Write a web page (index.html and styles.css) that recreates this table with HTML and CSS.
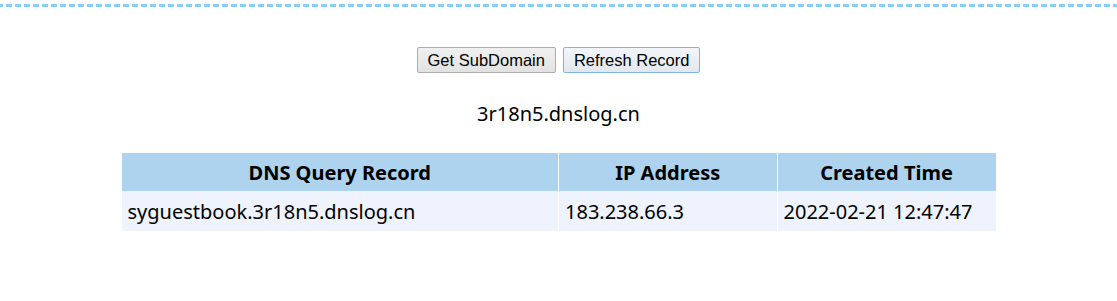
FILE: index.html
```html
<!DOCTYPE html>
<html lang="en">

<head>
    <meta charset="UTF-8">
    <meta name="viewport" content="width=device-width, initial-scale=1.0">
    <title>DNSLog Platform</title>
    <link rel="stylesheet" href="styles.css">
</head>

<body>
    <div class="top-line"></div>

    <div class="toolbar">
        <button type="button" class="btn">Get SubDomain</button>
        <button type="button" class="btn btn-active">Refresh Record</button>
    </div>

    <div class="domain" id="myDomain">3r18n5.dnslog.cn</div>

    <table class="records">
        <thead>
            <tr>
                <th class="col-query">DNS Query Record</th>
                <th class="col-ip">IP Address</th>
                <th class="col-time">Created Time</th>
            </tr>
        </thead>
        <tbody id="myRecords">
            <tr>
                <td>syguestbook.3r18n5.dnslog.cn</td>
                <td>183.238.66.3</td>
                <td>2022-02-21 12:47:47</td>
            </tr>
        </tbody>
    </table>
</body>

</html>
```

FILE: styles.css
```css
body {
    margin: 0;
    font-family: 'Noto Sans', 'Open Sans', sans-serif;
    color: #000;
    background-color: #fff;
}

/* dashed strip across the top */
.top-line {
    height: 3px;
    margin-top: 4px;
    background: repeating-linear-gradient(to right, #87cefa 0 6px, transparent 6px 9px);
    background-position: -3px 0;
}

.toolbar {
    display: flex;
    justify-content: center;
    gap: 7px;
    margin-top: 40px;
}

.btn {
    height: 26px;
    padding: 0 10px;
    font-family: 'Liberation Sans', Arial, sans-serif;
    font-size: 16.5px;
    color: #000;
    background: linear-gradient(#f0f0f0, #e2e2e2);
    border: 1px solid #adadad;
    border-radius: 2px;
    cursor: pointer;
}

.btn-active {
    border-color: #7eb4ea;
    background: linear-gradient(#f2f5f9, #e4e8ee);
}

.domain {
    margin-top: 27px;
    text-align: center;
    font-size: 20px;
    line-height: 28px;
}

.records {
    width: 874px;
    margin: 25px auto 0;
    border-collapse: collapse;
    font-size: 20px;
}

.records th,
.records td {
    border-left: 1px solid #fff;
    padding: 0 6px;
}

.records th:first-child,
.records td:first-child {
    border-left: none;
}

.records th {
    height: 38px;
    background-color: #add3ee;
    font-weight: bold;
    text-align: center;
}

.records td {
    height: 40px;
    background-color: #eef3fd;
    text-align: left;
}

.col-query {
    width: 50%;
}

.col-ip,
.col-time {
    width: 25%;
}
```
